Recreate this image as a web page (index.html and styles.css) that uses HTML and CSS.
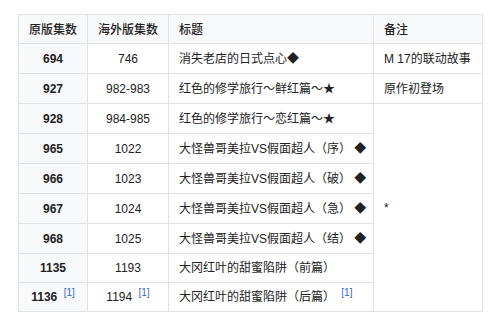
FILE: index.html
```html
<!DOCTYPE html>
<html lang="zh">
<head>
<meta charset="utf-8">
<link rel="stylesheet" href="styles.css">
</head>
<body>
<div class="wrap">
<table class="wikitable">
  <colgroup>
    <col class="c1"><col class="c2"><col class="c3"><col class="c4">
  </colgroup>
  <thead>
    <tr><th>原版集数</th><th>海外版集数</th><th class="left">标题</th><th class="left">备注</th></tr>
  </thead>
  <tbody>
    <tr><th>694</th><td class="center">746</td><td>消失老店的日式点心<span class="sym">◆</span></td><td>M 17的联动故事</td></tr>
    <tr><th>927</th><td class="center">982-983</td><td>红色的修学旅行～鲜红篇～<span class="sym">★</span></td><td>原作初登场</td></tr>
    <tr><th>928</th><td class="center">984-985</td><td>红色的修学旅行～恋红篇～<span class="sym">★</span></td><td rowspan="8" class="mid">*</td></tr>
    <tr><th>965</th><td class="center">1022</td><td>大怪兽哥美拉VS假面超人（序） <span class="sym">◆</span></td></tr>
    <tr><th>966</th><td class="center">1023</td><td>大怪兽哥美拉VS假面超人（破） <span class="sym">◆</span></td></tr>
    <tr><th>967</th><td class="center">1024</td><td>大怪兽哥美拉VS假面超人（急） <span class="sym">◆</span></td></tr>
    <tr><th>968</th><td class="center">1025</td><td>大怪兽哥美拉VS假面超人（结） <span class="sym">◆</span></td></tr>
    <tr><th>1135</th><td class="center">1193</td><td>大冈红叶的甜蜜陷阱（前篇）</td></tr>
    <tr><th>1136 <sup class="ref">[1]</sup></th><td class="center">1194 <sup class="ref">[1]</sup></td><td>大冈红叶的甜蜜陷阱（后篇） <sup class="ref">[1]</sup></td></tr>
  </tbody>
</table>
</div>
</body>
</html>
```

FILE: styles.css
```css
html, body {
  margin: 0;
  padding: 0;
  background: #ffffff;
}
.wrap {
  padding: 14px 18px;
}
.wikitable {
  border-collapse: collapse;
  table-layout: fixed;
  width: 464px;
  font-family: "Liberation Sans", "Noto Sans CJK SC", sans-serif;
  font-size: 12px;
  line-height: 20px;
  color: #222222;
  background: #ffffff;
  border: 1px solid #e2e2e2;
}
.c1 { width: 69px; }
.c2 { width: 81px; }
.c3 { width: 205px; }
.c4 { width: 109px; }
.wikitable th,
.wikitable td {
  border: 1px solid #e2e2e2;
  padding: 4px 10px;
  height: 20px;
  white-space: nowrap;
}
.wikitable th {
  background: #f8f9fa;
  font-weight: bold;
  text-align: center;
}
.wikitable thead th {
  font-weight: 500;
  font-family: "Noto Sans CJK SC", sans-serif;
}
.wikitable th.left { text-align: left; }
.wikitable td { text-align: left; }
.wikitable td.center { text-align: center; }
.wikitable td.mid { vertical-align: middle; }
.sym {
  font-family: "Noto Sans CJK SC", sans-serif;
}
.ref {
  color: #3366cc;
  font-weight: normal;
  font-size: 10px;
  line-height: 0;
  vertical-align: 5px;
  margin-left: 3px;
}
```
